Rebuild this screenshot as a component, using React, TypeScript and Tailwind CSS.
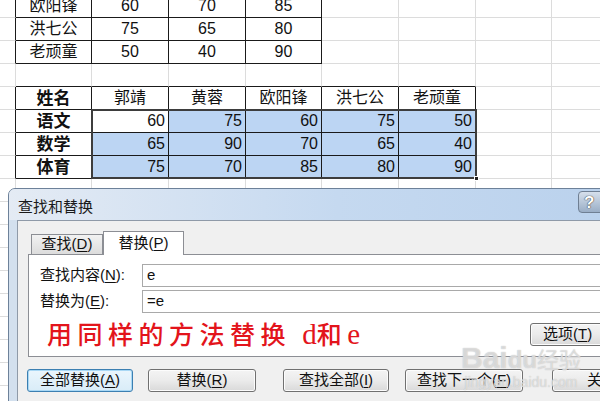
import React from 'react'

const sheetFont = { fontFamily: '"Liberation Sans", "Noto Sans CJK SC", sans-serif' }
const uiFont = { fontFamily: '"Liberation Sans", "Noto Sans CJK SC", sans-serif' }

type Cell = { t?: string; b?: boolean; align?: 'c' | 'r' }

const rows: Cell[][] = [
  [{}, { t: '欧阳锋' }, { t: '60' }, { t: '70' }, { t: '85' }],
  [{}, { t: '洪七公' }, { t: '75' }, { t: '65' }, { t: '80' }],
  [{}, { t: '老顽童' }, { t: '50' }, { t: '40' }, { t: '90' }],
  [],
  [{}, { t: '姓名', b: true }, { t: '郭靖' }, { t: '黄蓉' }, { t: '欧阳锋' }, { t: '洪七公' }, { t: '老顽童' }],
  [{}, { t: '语文', b: true }, { t: '60', align: 'r' }, { t: '75', align: 'r' }, { t: '60', align: 'r' }, { t: '75', align: 'r' }, { t: '50', align: 'r' }],
  [{}, { t: '数学', b: true }, { t: '65', align: 'r' }, { t: '90', align: 'r' }, { t: '70', align: 'r' }, { t: '65', align: 'r' }, { t: '40', align: 'r' }],
  [{}, { t: '体育', b: true }, { t: '75', align: 'r' }, { t: '70', align: 'r' }, { t: '85', align: 'r' }, { t: '80', align: 'r' }, { t: '90', align: 'r' }],
]

const ROWS = 18
const COLS = 9

function inTop(r: number, c: number) {
  return r >= 0 && r <= 2 && c >= 1 && c <= 4
}
function inMain(r: number, c: number) {
  return r >= 4 && r <= 7 && c >= 1 && c <= 6
}
function inTable(r: number, c: number) {
  return inTop(r, c) || inMain(r, c)
}

function SheetCell({ r, c }: { r: number; c: number }) {
  const cell = rows[r]?.[c] ?? {}
  const table = inTable(r, c)
  const rightBlack = table || inTable(r, c + 1)
  const bottomBlack = table || inTable(r + 1, c)
  const selected = r >= 5 && r <= 7 && c >= 2 && c <= 6 && !(r === 5 && c === 2)
  const align = cell.align === 'r' ? 'justify-end pr-[3px]' : 'justify-center'
  return (
    <div
      className={`flex items-center h-[23px] border-r border-b leading-none text-[#111] ${align} ${
        rightBlack ? 'border-r-[#1a1a1a]' : 'border-r-[#dcdcdc]'
      } ${bottomBlack ? 'border-b-[#1a1a1a]' : 'border-b-[#dcdcdc]'} ${selected ? 'bg-[#bcd5f3]' : 'bg-white'} ${
        cell.b ? 'font-bold text-[17px]' : 'text-[16px]'
      }`}
    >
      {cell.t}
    </div>
  )
}

function Sheet() {
  const cells = []
  for (let r = 0; r < ROWS; r++) {
    for (let c = 0; c < COLS; c++) {
      cells.push(<SheetCell key={`${r}-${c}`} r={r} c={c} />)
    }
  }
  return (
    <div className="relative -mt-[5px]" style={sheetFont}>
      <div className="grid grid-cols-[16px_76px_77px_77px_76px_77px_77px_76px_77px]">{cells}</div>
      {/* selection outline */}
      <div className="absolute left-[91px] top-[114px] w-[386px] h-[70px] border-2 border-[#3d3d3d] pointer-events-none" />
      <div className="absolute left-[474px] top-[181px] w-[5px] h-[5px] bg-[#222] border border-white pointer-events-none" />
    </div>
  )
}

function Btn({ children, focus, className = '' }: { children: React.ReactNode; focus?: boolean; className?: string }) {
  return (
    <div
      className={`h-[23px] flex items-center justify-center rounded-[3px] border text-[15px] text-[#111] shrink-0 ${
        focus
          ? 'border-[#3c7fb1] bg-gradient-to-b from-[#eaf6fd] to-[#d9ecf8] shadow-[inset_0_0_0_1px_#a9d8f5]'
          : 'border-[#707070] bg-gradient-to-b from-[#f4f4f4] via-[#ebebeb] to-[#d9d9d9] shadow-[inset_0_0_0_1px_#fcfcfc]'
      } ${className}`}
    >
      {children}
    </div>
  )
}

function U({ children }: { children: React.ReactNode }) {
  return <span className="underline underline-offset-2">{children}</span>
}

function Dialog() {
  return (
    <div
      className="absolute left-[8px] top-[188px] w-[660px] h-[240px] rounded-t-[7px] border border-[#6d8199] bg-[#d3e0ee]"
      style={uiFont}
    >
      {/* title bar */}
      <div className="h-[31px] flex items-center pl-[9px] pt-[3px] rounded-t-[6px] bg-gradient-to-r from-[#e4ebf4] via-[#c5d9f0] to-[#b8d0ec]">
        <span className="w-[560px] text-[15px] text-[#1a1a1a] leading-none">查找和替换</span>
        <div className="w-[40px] h-[22px] -mt-[8px] rounded-[4px] border border-[#6f7f93] bg-gradient-to-b from-[#d6e0ec] to-[#9aaec6] flex items-center pl-[5px]">
          <span className="text-[17px] font-bold text-white leading-none [text-shadow:0_0_1px_#333,0_0_1px_#333]">?</span>
        </div>
      </div>
      {/* client area */}
      <div className="ml-[8px] h-full border-l border-t border-[#8f9aa8] bg-[#f0f0f0] pt-[9px]">
        {/* tabs */}
        <div className="flex items-end h-[24px] pl-[12px] relative z-10">
          <div className="h-[20px] w-[72px] ml-[1px] border border-b-0 border-[#8c8e94] bg-gradient-to-b from-[#f2f2f2] to-[#dcdcdc] flex items-center justify-center text-[15px] text-[#111]">
            查找(<U>D</U>)
          </div>
          <div className="h-[24px] w-[81px] border border-b-0 border-[#8c8e94] bg-white flex items-center justify-center text-[15px] text-[#111] -mb-px">
            替换(<U>P</U>)
          </div>
        </div>
        <div className="ml-[10px] h-[103px] border border-[#8c8e94] bg-white pt-[9px] pl-[11px]">
          <div className="flex items-center h-[23px]">
            <span className="w-[102px] text-[15px] text-[#111]">
              查找内容(<U>N</U>):
            </span>
            <div className="flex-1 h-[23px] border border-[#a9a9a9] bg-white flex items-center pl-[4px] text-[15px] text-[#111]">
              e
            </div>
          </div>
          <div className="flex items-center h-[23px] mt-[3px]">
            <span className="w-[102px] text-[15px] text-[#111]">
              替换为(<U>E</U>):
            </span>
            <div className="flex-1 h-[23px] border border-[#a9a9a9] bg-white flex items-center pl-[4px] text-[15px] text-[#111]">
              =e
            </div>
          </div>
          <div className="flex items-center h-[42px]">
            <div
              className="w-[490px] pl-[7px] text-[25px] font-medium text-[#e3141b] leading-none tracking-[5.5px]"
              style={{ fontFamily: '"Noto Sans CJK SC", sans-serif' }}
            >
              用同样的方法替换 <span style={{ fontFamily: '"Liberation Serif", "Noto Sans CJK SC", serif' }} className="text-[29px] tracking-normal">d</span>和<span style={{ fontFamily: '"Liberation Serif", serif' }} className="text-[29px]">e</span>
            </div>
            <Btn className="w-[100px] justify-start pl-[12px]">
              选项(<U>T</U>)
            </Btn>
          </div>
        </div>
        {/* bottom buttons */}
        <div className="flex mt-[12px] pl-[9px]">
          <Btn focus className="w-[106px]">
            全部替换(<U>A</U>)
          </Btn>
          <Btn className="w-[108px] ml-[15px]">
            替换(<U>R</U>)
          </Btn>
          <Btn className="w-[106px] ml-[27px]">
            查找全部(<U>I</U>)
          </Btn>
          <Btn className="w-[118px] ml-[16px]">
            查找下一个(<U>F</U>)
          </Btn>
          <Btn className="w-[100px] ml-[29px] justify-start pl-[34px]">关闭</Btn>
        </div>
      </div>
      {/* watermark */}
      <div className="absolute left-[452px] top-[154px] flex flex-col items-center pointer-events-none text-white/50 [text-shadow:0_0_1px_#b0b0b0]">
        <span className="text-[30px] font-bold leading-none" style={{ fontFamily: '"Liberation Sans", "Noto Sans CJK SC", sans-serif' }}>
          Bai<span className="text-[24px]">du</span>
          <span className="text-[22px] font-normal">经验</span>
        </span>
        <span className="text-[14px] leading-none mt-[2px]">jingyan.baidu.com</span>
      </div>
    </div>
  )
}

export default function App() {
  return (
    <div className="relative w-[600px] h-[401px] overflow-hidden bg-white">
      <Sheet />
      <Dialog />
    </div>
  )
}
